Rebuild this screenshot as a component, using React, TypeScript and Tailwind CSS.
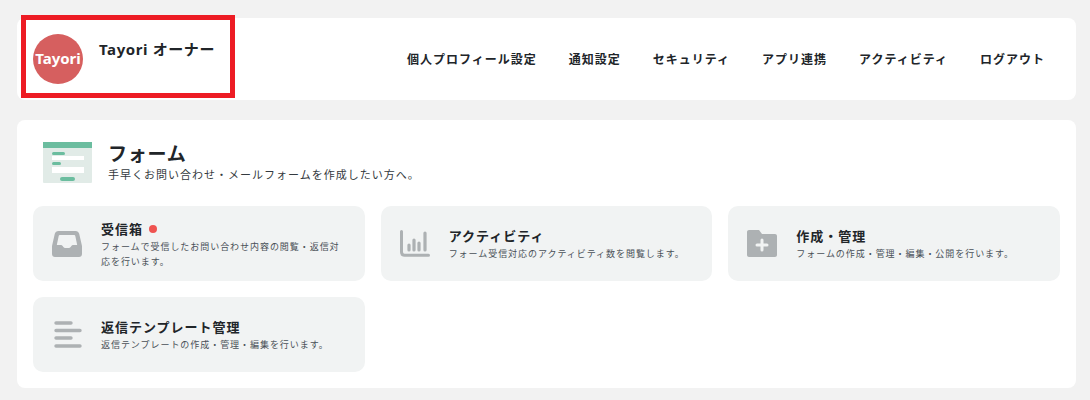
import { type ReactNode } from "react"

const navItems = ["個人プロフィール設定", "通知設定", "セキュリティ", "アプリ連携", "アクティビティ", "ログアウト"]

function InboxIcon() {
    return (
        <svg className="-ml-[1px]" width="30" height="26" viewBox="0 0 30 26" fill="none">
            <path
                fillRule="evenodd"
                d="M6.500 0h17c1.900 0 3.300 1.100 3.700 2.800L30 15v8c0 1.700-1.300 3-3 3H3c-1.700 0-3-1.300-3-3v-8L2.800 2.800C3.200 1.100 4.600 0 6.500 0Zm1.300 4c-.6 0-1 .4-1.100.9L4.800 14H9c.7 0 1.200.3 1.600.9l1 1.400c.4.500.9.700 1.400.7h4c.6 0 1-.2 1.400-.7l1-1.400c.4-.6.900-.9 1.600-.9h4.200L23.300 4.900c-.1-.5-.5-.9-1.100-.9H7.800Z"
                fill="#adb1b3"
            />
        </svg>
    )
}

function ChartIcon() {
    return (
        <svg width="30" height="27" viewBox="0 0 30 27" fill="none" stroke="#adb1b3" strokeLinecap="round">
            <path d="M1.500 1.500V22c0 2 1 3.300 3 3.300h24" strokeWidth="3" />
            <path d="M9 15v5M14 10v10M19 13v7M25 3v17" strokeWidth="3.200" />
        </svg>
    )
}

function FolderPlusIcon() {
    return (
        <svg className="-ml-[1px]" width="30" height="27" viewBox="0 0 30 27" fill="none">
            <path d="M2 0h10l3 4h13c1.100 0 2 .900 2 2v19c0 1.100-.900 2-2 2H2c-1.100 0-2-.900-2-2V2C0 .900.900 0 2 0Z" fill="#adb1b3" />
            <path d="M15 10v10M10 15h10" stroke="#f1f3f3" strokeWidth="3" strokeLinecap="round" />
        </svg>
    )
}

function LinesIcon() {
    return (
        <svg className="ml-[1px]" width="28" height="27" viewBox="0 0 28 27" fill="none" stroke="#adb1b3" strokeWidth="3.400" strokeLinecap="round">
            <path d="M2 2h15M2 9.500h24M2 17h15M2 25h24" />
        </svg>
    )
}

function FormIllustration() {
    return (
        <div className="flex h-[41px] w-[49px] flex-col items-center rounded-[1px] bg-[#e1ebe7]">
            <div className="h-[6px] w-full shrink-0 bg-[#6bbd9f]" />
            <div className="mt-[4px] flex w-[32px] flex-col items-start">
                <div className="h-[3px] w-[13px] rounded-full bg-[#6bbd9f]" />
                <div className="mt-[1px] h-[4px] w-full bg-white" />
                <div className="mt-[2px] h-[3px] w-[9px] rounded-full bg-[#6bbd9f]" />
                <div className="mt-[2px] h-[6px] w-full bg-white" />
                <div className="mt-[4px] h-[4px] w-[15px] self-center rounded-full bg-[#6bbd9f]" />
            </div>
        </div>
    )
}

function MenuCard({ icon, title, text, dot }: { icon: ReactNode; title: string; text: string; dot?: boolean }) {
    return (
        <div className="flex h-[75px] items-center rounded-[10px] bg-[#f1f3f3]">
            <div className="flex w-[68px] shrink-0 justify-center">{icon}</div>
            <div className="min-w-0 pr-[22px]">
                <div className="flex items-center text-[13px] leading-[20px] font-bold tracking-[1px] text-[#212529]">
                    {title}
                    {dot && <span className="ml-[6px] h-[8px] w-[8px] rounded-full bg-[#ef5350]" />}
                </div>
                <p className="text-[9px] leading-[15px] tracking-[0.95px] text-[#495057]">{text}</p>
            </div>
        </div>
    )
}

export default function App() {
    return (
        <div className="relative h-[400px] w-[1090px] overflow-hidden bg-[#f2f2f2] pt-[18px] pr-[14px] pl-[17px] font-['Noto_Sans','Noto_Sans_CJK_JP',sans-serif]">
            <header className="flex h-[82px] items-center justify-between rounded-[8px] bg-white pr-[31px] pl-[16px]">
                <div className="flex h-full items-start">
                    <div className="mt-[16px] flex h-[50px] w-[50px] items-center justify-center rounded-full bg-[#d65f5f] pb-[1px] text-[15px] font-bold text-white">
                        Tayori
                    </div>
                    <div className="mt-[21px] ml-[16px] text-[15px] leading-[21px] font-bold tracking-[0.6px] text-[#212529]">Tayori オーナー</div>
                </div>
                <nav className="mt-[1px] flex gap-[32px] text-[12px] leading-[18px] font-bold tracking-[1px] text-[#212529]">
                    {navItems.map((item) => (
                        <a key={item}>{item}</a>
                    ))}
                </nav>
            </header>

            <section className="mt-[20px] h-[268px] rounded-[8px] bg-white px-[16px] pt-[22px]">
                <div className="flex h-[42px] items-start pl-[10px]">
                    <FormIllustration />
                    <div className="ml-[16px]">
                        <h2 className="text-[19px] leading-[24px] font-bold tracking-[0.8px] text-[#212529]">フォーム</h2>
                        <p className="mt-[1px] text-[11px] leading-[16px] tracking-[1px] text-[#343a40]">手早くお問い合わせ・メールフォームを作成したい方へ。</p>
                    </div>
                </div>
                <div className="mt-[22px] grid grid-cols-3 gap-[16px]">
                    <MenuCard icon={<InboxIcon />} title="受信箱" dot text="フォームで受信したお問い合わせ内容の閲覧・返信対応を行います。" />
                    <MenuCard icon={<ChartIcon />} title="アクティビティ" text="フォーム受信対応のアクティビティ数を閲覧します。" />
                    <MenuCard icon={<FolderPlusIcon />} title="作成・管理" text="フォームの作成・管理・編集・公開を行います。" />
                    <MenuCard icon={<LinesIcon />} title="返信テンプレート管理" text="返信テンプレートの作成・管理・編集を行います。" />
                </div>
            </section>

            {/* annotation box drawn over the header */}
            <div className="absolute top-[15px] left-[21px] h-[83px] w-[214px] border-[5px] border-[#ed1c24]" />
        </div>
    )
}
